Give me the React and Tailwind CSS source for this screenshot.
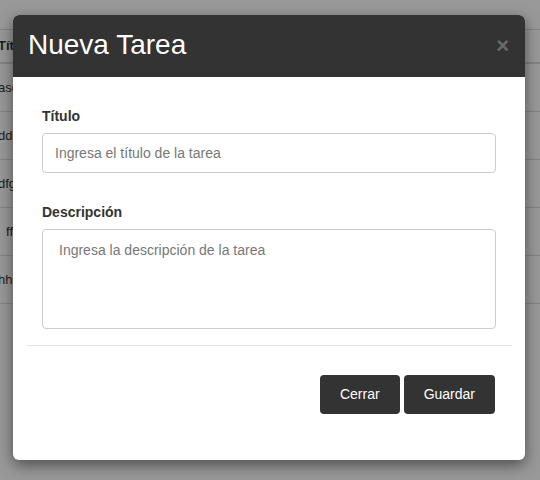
const FILAS = ['asd', 'ddd', 'dfg', 'fff', 'hhh'];

export default function App() {
  return (
    <div className="relative w-[540px] h-[480px] overflow-hidden bg-white text-[#333]" style={{ fontFamily: '"Liberation Sans", Arial, sans-serif' }}>
      {/* Tabla de fondo */}
      <div className="pt-[29px] ml-[-10px]">
        <div className="border-t border-[#ddd]">
          <div className="h-[34px] flex items-center px-2 font-bold text-[13px] border-b-2 border-[#ddd]">Título</div>
          {FILAS.map((f, i) => (
            <div key={f} className={`h-[48px] flex items-center px-2 text-[13px] border-b border-[#ddd] ${i === 3 ? 'pl-[16px]' : ''}`}>
              {f}
            </div>
          ))}
        </div>
      </div>

      {/* Overlay + modal */}
      <div className="absolute inset-0 bg-black/40 flex justify-start pl-[13px] pt-[15px]">
        <div className="w-[512px] h-[445px] bg-white rounded-[6px] shadow-[0_5px_15px_rgba(0,0,0,0.5)] flex flex-col overflow-hidden">
          <div className="h-[62px] bg-[#333] flex items-center justify-between pl-[15px] pr-[16px] shrink-0">
            <h4 className="text-white text-[28px] leading-none pb-[2px]">Nueva Tarea</h4>
            <span className="text-[#6a6a6a] text-[22px] font-bold leading-none">×</span>
          </div>

          <div className="px-[29px] pt-[29px]">
            <label className="block text-[14px] font-bold mb-[6px]">Título</label>
            <input
              className="w-full h-[40px] border border-[#ccc] rounded-[4px] px-[12px] text-[14px] placeholder:text-[#777] outline-none"
              placeholder="Ingresa el título de la tarea"
            />
            <label className="block text-[14px] font-bold mt-[29px] mb-[6px]">Descripción</label>
            <textarea
              className="block w-full h-[100px] border border-[#ccc] rounded-[4px] px-[16px] py-[10px] text-[14px] placeholder:text-[#777] outline-none resize-none"
              placeholder="Ingresa la descripción de la tarea"
            />
          </div>

          <div className="mx-[13px] mt-[16px] border-t border-[#e5e5e5]" />

          <div className="flex justify-end gap-[4px] px-[30px] pt-[29px]">
            <button className="h-[39px] px-5 bg-[#333] text-white text-[14px] rounded-[4px]">Cerrar</button>
            <button className="h-[39px] px-5 bg-[#333] text-white text-[14px] rounded-[4px]">Guardar</button>
          </div>
        </div>
      </div>
    </div>
  );
}
